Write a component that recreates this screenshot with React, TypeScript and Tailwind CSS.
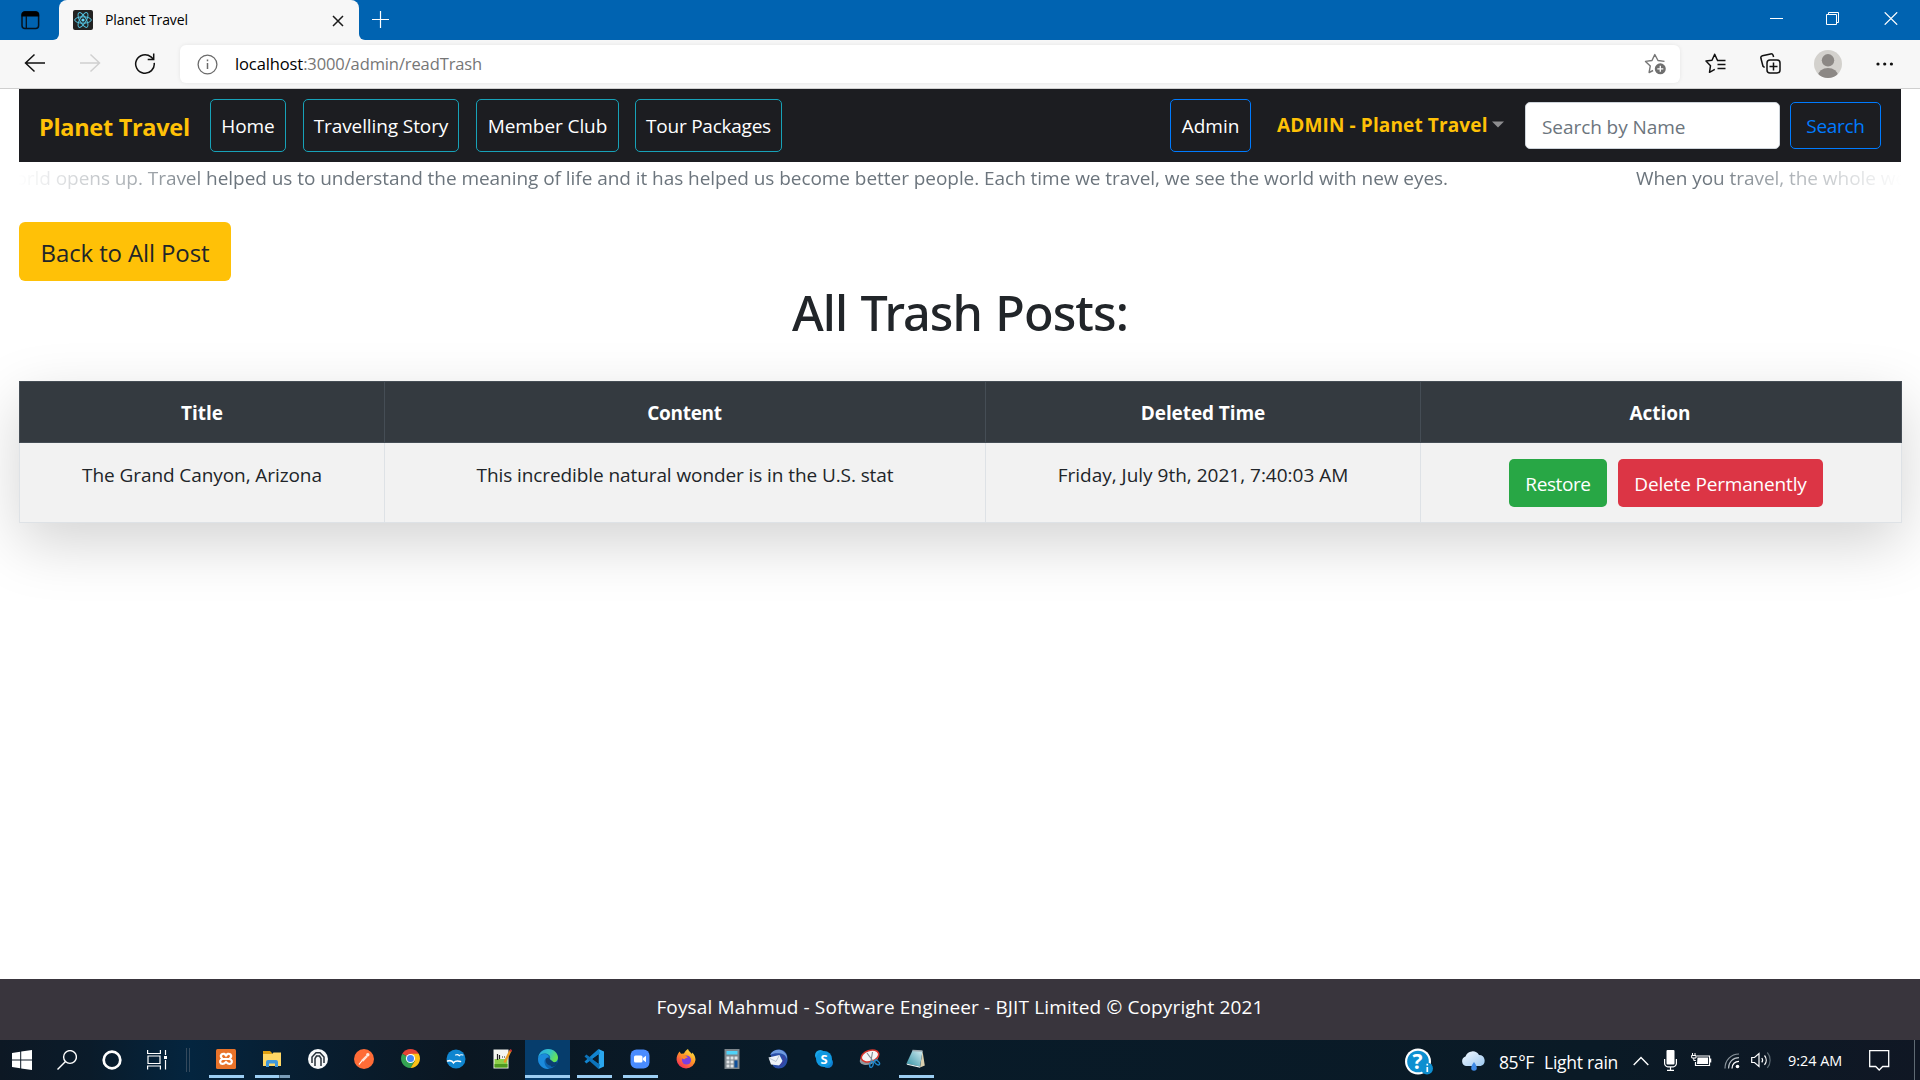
import type { ReactNode } from "react";

const STORY =
  "When you travel, the whole world opens up. Travel helped us to understand the meaning of life and it has helped us become better people. Each time we travel, we see the world with new eyes.";

/* ---------- Browser chrome ---------- */

function TabStrip() {
  return (
    <div className="flex h-10 w-full items-start bg-[linear-gradient(to_right,#0063b1_0px,#0063b1_50px,#f7f7f7_50px,#f7f7f7_370px,#0063b1_370px)]">
      <div className="flex h-10 w-[59px] items-start rounded-br-md bg-[#0063b1] pl-[21px] pt-[11px]">
        <svg width="19" height="19" viewBox="0 0 19 19" fill="none">
          <rect x="1" y="1" width="16.6" height="16.4" rx="3" stroke="#04131f" strokeWidth="1.5" />
          <path d="M.5 4a3.5 3.5 0 0 1 3.500-3.700h10.500a3.500 3.500 0 0 1 3.600 3.700v1.600H.5z" fill="#000" />
          <path d="M5.300 5v12" stroke="#04131f" strokeWidth="1.300" />
        </svg>
      </div>
      <div className="h-10 w-[300px] bg-[#0063b1]">
        <div className="flex h-10 w-[300px] items-start rounded-t-lg bg-[#f7f7f7]">
          <svg className="ml-[14px] mt-[10px]" width="20" height="20" viewBox="0 0 20 20" fill="none">
            <rect width="20" height="20" rx="2" fill="#222" />
            <g stroke="#53c1de" strokeWidth="1">
              <ellipse cx="10" cy="10" rx="8.300" ry="3.200" />
              <ellipse cx="10" cy="10" rx="8.300" ry="3.200" transform="rotate(60 10 10)" />
              <ellipse cx="10" cy="10" rx="8.300" ry="3.200" transform="rotate(120 10 10)" />
            </g>
            <circle cx="10" cy="10" r="1.600" fill="#61dafb" />
          </svg>
          <span className="ml-3 mt-[10px] text-[14px] leading-5 tracking-[-0.12px] text-black">Planet Travel</span>
          <svg className="ml-auto mr-[15px] mt-[15px]" width="12" height="12" viewBox="0 0 12 12">
            <path d="M1 1l10 10M11 1L1 11" stroke="#1b1b1b" strokeWidth="1.500" />
          </svg>
        </div>
      </div>
      <div className="flex h-10 flex-1 items-start rounded-bl-md bg-[#0063b1]">
        <svg className="ml-[13px] mt-[11px]" width="17" height="17" viewBox="0 0 17 17">
          <path d="M8.500 0v17M0 8.500h17" stroke="#fff" strokeWidth="1.200" />
        </svg>
      </div>
      <div className="flex h-10 items-start bg-[#0063b1]">
        <svg className="mr-[43px] mt-[12px]" width="13" height="13" viewBox="0 0 13 13">
          <path d="M0 6.500h13" stroke="#fff" strokeWidth="1" />
        </svg>
        <svg className="mr-[44px] mt-[12px]" width="14" height="13" viewBox="0 0 14 13" fill="none" stroke="#fff">
          <path d="M.5 2.500h10v10H.5zM2.500 2.500V.5h10v10h-2" />
        </svg>
        <svg className="mr-[22px] mt-[12px]" width="14" height="13" viewBox="0 0 14 13" fill="none" stroke="#fff" strokeWidth="1.200">
          <path d="M.7.3l12.500 12.400M13.200.3L.7 12.700" />
        </svg>
      </div>
    </div>
  );
}

function AddressBar() {
  return (
    <div className="flex h-[49px] w-full items-start border-b border-[#cfcfcf] bg-[#f7f7f7]">
      <div className="flex w-[180px] items-start pt-[13px]">
        <svg className="ml-[24px]" width="22" height="20" viewBox="0 0 22 20" fill="none" stroke="#111" strokeWidth="1.500">
          <path d="M10.500 1.500L1.500 10l9 8.500M1.500 10H21" />
        </svg>
        <svg className="ml-[33px]" width="22" height="20" viewBox="0 0 22 20" fill="none" stroke="#d0d0d0" strokeWidth="1.500">
          <path d="M11.500 1.500l9 8.500-9 8.500M20.500 10H1" />
        </svg>
        <svg className="ml-[33px]" width="22" height="22" viewBox="0 0 22 22" fill="none" stroke="#111" strokeWidth="1.500">
          <path d="M20.200 9.800A9.300 9.300 0 1 1 17 3.900l2.300 2.200" />
          <path d="M19.700.6v6h-6" />
        </svg>
      </div>
      <div className="mt-[5px] flex h-[38px] w-[1500px] items-center rounded-md bg-white shadow-[0_0_4px_rgba(0,0,0,0.08)]">
        <svg className="ml-[17px]" width="21" height="21" viewBox="0 0 21 21" fill="none" stroke="#6b6b6b" strokeWidth="1.300">
          <circle cx="10.500" cy="10.500" r="9.400" />
          <path d="M10.500 9v6M10.500 5.600v1.700" strokeWidth="1.500" />
        </svg>
        <span className="ml-[17px] text-[16.5px] leading-6 tracking-[-0.11px] text-[#767676]">
          <span className="text-black">localhost</span>:3000/admin/readTrash
        </span>
        <svg className="ml-auto mr-[14px]" width="22" height="22" viewBox="0 0 22 22" fill="none" stroke="#767676" strokeWidth="1.400" strokeLinejoin="round">
          <path d="M20.500 8.400l-6.500-.9L10.800 1.500 8 7.500l-6.500.9 4.800 4.500-1.200 6.600 4-2" />
          <circle cx="16.300" cy="15.800" r="5.500" fill="#6f6f6f" stroke="none" />
          <path d="M16.300 12.800v6M13.300 15.800h6" stroke="#fff" strokeWidth="1.300" />
        </svg>
      </div>
      <div className="flex h-12 items-start">
        <svg className="ml-[25px] mt-[13px]" width="21" height="21" viewBox="0 0 21 21" fill="none" stroke="#111" strokeWidth="1.500" strokeLinejoin="round">
          <path d="M13 7.300l-.6 0L9.700 1.300 7 7.300l-6 .8 4.500 4.600-1 6.600 5.300-3" />
          <path d="M12 7.500h8.500M12.500 11.500h8M12.500 15.500h8" />
        </svg>
        <svg className="ml-[34px] mt-[13px]" width="21" height="21" viewBox="0 0 21 21" fill="none" stroke="#111" strokeWidth="1.500">
          <path d="M4.600 14.500L3 13.200.9 5.300a2.200 2.200 0 0 1 1.500-2.600l8.200-1.800a2.200 2.200 0 0 1 2.500 1.400l.5 1.700" />
          <rect x="7" y="7" width="13" height="13" rx="3" fill="#f7f7f7" />
          <path d="M13.500 9.500v8M9.500 13.500h8" />
        </svg>
        <svg className="ml-[33px] mt-[10px]" width="28" height="28" viewBox="0 0 28 28">
          <clipPath id="avatar"><circle cx="14" cy="14" r="14" /></clipPath>
          <g clipPath="url(#avatar)">
            <rect width="28" height="28" fill="#d3d1cd" />
            <circle cx="14" cy="10.300" r="6.200" fill="#8c8885" />
            <ellipse cx="14" cy="26" rx="10" ry="8" fill="#8c8885" />
          </g>
        </svg>
        <svg className="ml-[34px] mt-[22px]" width="18" height="4" viewBox="0 0 18 4" fill="#111">
          <circle cx="2" cy="2" r="1.600" />
          <circle cx="8.700" cy="2" r="1.600" />
          <circle cx="15.400" cy="2" r="1.600" />
        </svg>
      </div>
    </div>
  );
}

/* ---------- Page ---------- */

function NavBar() {
  const link = "flex h-[53px] items-center justify-center rounded-[5px] border pt-[2px] text-[19px] text-white";
  return (
    <nav className="flex h-[73px] w-[1882px] items-center whitespace-nowrap bg-[#1c1d21] px-5">
      <span className="w-[171px] pt-[3px] text-[23.5px] font-bold leading-8 tracking-[-0.3px] text-[#ffc107]">Planet Travel</span>
      <a className={`${link} w-[76px] border-[#17a2b8] tracking-[-0.1px]`}>Home</a>
      <a className={`${link} ml-[17px] w-[156px] border-[#17a2b8] tracking-[-0.1px]`}>Travelling Story</a>
      <a className={`${link} ml-[17px] w-[143px] border-[#17a2b8] tracking-[-0.08px]`}>Member Club</a>
      <a className={`${link} ml-4 w-[147px] border-[#17a2b8] tracking-[-0.24px]`}>Tour Packages</a>
      <a className={`${link} ml-auto w-[81px] border-[#007bff]`}>Admin</a>
      <span className="ml-[26px] w-[215px] pb-[2px] text-[19px] font-bold leading-[30px] tracking-[0.13px] text-[#ffc107]">ADMIN - Planet Travel</span>
      <svg className="mb-[2px] mr-[21px]" width="12" height="7" viewBox="0 0 12 7">
        <path d="M0 .5h12L6 6.500z" fill="#8e8e90" />
      </svg>
      <input
        className="h-[47px] w-[255px] rounded-[5px] border border-[#ced4da] bg-white px-4 pt-[2px] text-[19px] tracking-[-0.07px] outline-none placeholder:text-[#6c757d]"
        placeholder="Search by Name"
      />
      <button className="ml-[10px] h-[47px] w-[91px] rounded-[5px] border border-[#007bff] pt-px text-[19px] tracking-[-0.3px] text-[#007bff]">Search</button>
    </nav>
  );
}

function Ticker() {
  return (
    <div className="flex h-[30px] w-[1882px] overflow-hidden whitespace-nowrap text-[19px] leading-[33px] tracking-[-0.05px] text-[#6c757d] [mask-image:linear-gradient(to_right,transparent,black_200px,black_calc(100%-200px),transparent)]">
      <div className="flex w-[1429px] shrink-0 justify-end">
        <span>{STORY}</span>
      </div>
      <span className="ml-[188px] shrink-0">{STORY}</span>
    </div>
  );
}

function TrashTable() {
  const th = "border border-[#454d55] p-0 pt-[2px] text-center font-bold";
  const td = "border border-[#dee2e6] p-0 pt-4 text-center align-top leading-[32px]";
  return (
    <table className="w-[1882px] table-fixed border-collapse bg-white text-[19px] text-[#212529] shadow-[0_20px_60px_rgba(0,0,0,0.175)]">
      <colgroup>
        <col className="w-[365px]" />
        <col className="w-[601px]" />
        <col className="w-[435px]" />
        <col className="w-[481px]" />
      </colgroup>
      <thead>
        <tr className="h-[61px] bg-[#343a40] text-white">
          <th className={th}>Title</th>
          <th className={`${th} pr-px tracking-[-0.3px]`}>Content</th>
          <th className={`${th} tracking-[-0.08px]`}>Deleted Time</th>
          <th className={`${th} pr-[2px]`}>Action</th>
        </tr>
      </thead>
      <tbody>
        <tr className="h-[80px] bg-[#f2f2f2]">
          <td className={`${td} tracking-[-0.08px]`}>The Grand Canyon, Arizona</td>
          <td className={`${td} tracking-[-0.09px]`}>This incredible natural wonder is in the U.S. stat</td>
          <td className={td}>Friday, July 9th, 2021, 7:40:03 AM</td>
          <td className="border border-[#dee2e6] p-0 align-top">
            <div className="flex gap-[11px] pl-[88px] pt-4 text-white">
              <button className="h-12 w-[98px] rounded-[5px] bg-[#28a745] pt-[2px] tracking-[-0.4px]">Restore</button>
              <button className="h-12 w-[205px] rounded-[5px] bg-[#dc3545] pt-[2px] tracking-[-0.17px]">Delete Permanently</button>
            </div>
          </td>
        </tr>
      </tbody>
    </table>
  );
}

/* ---------- Taskbar ---------- */

const apps: { name: string; state?: "open" | "multi" | "active"; icon: ReactNode }[] = [
  {
    name: "XAMPP",
    state: "open",
    icon: (
      <svg width="20" height="20" viewBox="0 0 20 20" fill="none">
        <rect width="20" height="20" rx="1.500" fill="#e8732a" />
        <path d="M5.500 5.500c2-1.500 3.500-.5 4.500 1 1-1.500 2.500-2.500 4.500-1 1.500 1.500.5 3-1 4.500 2.500.5 3 3 1.500 4.500-2 1-3.500 0-5-1.500-1.500 1.500-3 2.500-5 1.500-1.500-1.500-1-4 1.500-4.500-1.500-1.500-2.500-3-1-4.500zM7 10h6" stroke="#fff" strokeWidth="2.200" />
      </svg>
    ),
  },
  {
    name: "Explorer",
    state: "multi",
    icon: (
      <svg width="20" height="20" viewBox="0 0 20 20">
        <path d="M1 2h7l2 2v3H1z" fill="#e0a010" />
        <path d="M1 5h9l1.500-1.500H19V17H1z" fill="#ffd765" />
        <path d="M4 18v-5a2 2 0 0 1 2-2h8a2 2 0 0 1 2 2v5h-3v-3.500H7V18z" fill="#3f97dc" />
      </svg>
    ),
  },
  {
    name: "OpenVPN",
    icon: (
      <svg width="20" height="20" viewBox="0 0 20 20" fill="none">
        <circle cx="10" cy="10" r="10" fill="#f7f9fa" />
        <path d="M4 14V8l4-4.300h4L16 8v6" stroke="#27313a" strokeWidth="1.500" />
        <path d="M7 17V9.500L8.500 7h3L13 9.500V17" stroke="#27313a" strokeWidth="1.500" />
      </svg>
    ),
  },
  {
    name: "Postman",
    icon: (
      <svg width="20" height="20" viewBox="0 0 20 20" fill="none">
        <circle cx="10" cy="10" r="10" fill="#ff6c37" />
        <path d="M5 15.500l3.500-4.500" stroke="#fff" strokeWidth="1.200" />
        <path d="M8.200 11.800l4.800-4.800" stroke="#ffe2d6" strokeWidth="2.400" />
        <circle cx="13.800" cy="5.800" r="1.700" fill="#ffe9df" />
      </svg>
    ),
  },
  {
    name: "Chrome",
    icon: (
      <svg width="19" height="19" viewBox="0 0 20 20">
        <path d="M10 10L1.340 5A10 10 0 0 1 18.660 5z" fill="#e54335" />
        <path d="M10 10L1.340 5A10 10 0 0 0 10 20l4.500-7.500z" fill="#34a353" />
        <path d="M10 10l4.500 2.500L10 20A10 10 0 0 0 18.660 5H10z" fill="#fbc116" />
        <circle cx="10" cy="10" r="4.800" fill="#fff" />
        <circle cx="10" cy="10" r="3.700" fill="#4285f4" />
      </svg>
    ),
  },
  {
    name: "OpenOffice",
    icon: (
      <svg width="20" height="20" viewBox="0 0 20 20" fill="none" stroke="#fff" strokeLinecap="round">
        <circle cx="10" cy="10" r="9.500" fill="#0f85cf" stroke="none" />
        <path d="M9.500 6c1.700-.8 2.900-.4 3.700.8.800-1.200 2.200-1.200 3.700-.8" strokeWidth="1.100" />
        <path d="M1.500 12c3-1 5 0 6 1.800 1.500-1.800 4-2.200 7-1.300" strokeWidth="1.600" />
      </svg>
    ),
  },
  {
    name: "Notepad++",
    icon: (
      <svg width="20" height="20" viewBox="0 0 20 20" fill="none">
        <rect x="1.500" y=".5" width="15" height="19" fill="#f4f6f0" />
        <rect x="2.500" y="10" width="13" height="8.500" fill="#8fd04a" />
        <rect x="2.500" y="15" width="13" height="3.500" fill="#4f9a20" />
        <path d="M5.500 5v6M7.500 6v4M10 8h1M12 8h1" stroke="#222" strokeWidth="1.200" />
        <path d="M18.500 1.500l-6 12" stroke="#e89a20" strokeWidth="2.400" />
        <path d="M19.200.5l-1 2" stroke="#c03030" strokeWidth="2.400" />
      </svg>
    ),
  },
  {
    name: "Edge",
    state: "active",
    icon: (
      <svg width="20" height="20" viewBox="0 0 20 20">
        <defs>
          <linearGradient id="edgeTop" x1="0" y1="0" x2="1" y2=".4">
            <stop offset="0" stopColor="#2aa6e6" />
            <stop offset=".6" stopColor="#35c6c5" />
            <stop offset="1" stopColor="#66e357" />
          </linearGradient>
        </defs>
        <circle cx="10" cy="10" r="10" fill="#0d64b0" />
        <path d="M.1 9C.8 3.500 5 0 10 0c6 0 10 4.300 10 8.500 0 3-2.300 5-5 5-2.500 0-3.800-1-3.800-1.800s1-1.200 1-3c0-2.500-2.400-4.200-5.400-4.200C3.500 4.500.8 6.500.1 9z" fill="url(#edgeTop)" />
        <path d="M12 13c1 .8 3.500 1 6 0 1.500 0 1 1.500 0 3-1.500 1.500-3 2-5 1.500z" fill="#063d6c" />
        <path d="M9.500 8.200c-2.700 1.200-3 7.500 3.700 8.600 2.500.3 4.500-.6 5.400-1.300" fill="#0c3f74" />
        <path d="M.1 9C1 6 4 4.800 7 5c3 .2 4 2 3.500 3.200C7 8.500 5.500 12 7 15.500c.8 2 2.200 3.500 4 4.400C4.500 20.500-.5 15.500.1 9z" fill="#1b8bdc" />
      </svg>
    ),
  },
  {
    name: "VS Code",
    state: "open",
    icon: (
      <svg width="20" height="20" viewBox="0 0 20 20">
        <path d="M14.500 0L20 2.500v15L14.500 20z" fill="#2aa7ee" />
        <path d="M14.500 0L.5 12.500l1.800 2L16 4.500z" fill="#1184cf" />
        <path d="M14.500 20L.5 7.500l1.800-2L16 15.500z" fill="#0d73b9" />
        <path d="M14.500 5.500v9L8.500 10z" fill="#0a1b29" />
      </svg>
    ),
  },
  {
    name: "Zoom",
    state: "open",
    icon: (
      <svg width="20" height="20" viewBox="0 0 20 20">
        <rect x=".5" y=".5" width="19" height="19" rx="6" fill="#4a8cff" />
        <rect x="4" y="6.500" width="8.500" height="7" rx="1.500" fill="#fff" />
        <path d="M13 9l3-2.200v6.400L13 11z" fill="#fff" />
      </svg>
    ),
  },
  {
    name: "Firefox",
    icon: (
      <svg width="20" height="20" viewBox="0 0 20 20">
        <defs>
          <linearGradient id="fox" x1=".9" y1="0" x2=".2" y2="1">
            <stop offset="0" stopColor="#fff04a" />
            <stop offset=".45" stopColor="#ff9a26" />
            <stop offset="1" stopColor="#f5245c" />
          </linearGradient>
        </defs>
        <path d="M3.500 2.500L5 4.800l3-.3c1-2.500 2.500-3.500 4-4.500.3 2 2.500 3 4 5l.3-1.500C18.500 6 19.500 8 19.500 11A9.500 9.500 0 0 1 .6 11C.4 7.500 1.500 5 3.500 2.500z" fill="url(#fox)" />
        <circle cx="10.500" cy="11" r="4.600" fill="#7a3fe0" />
        <path d="M4.500 6.500c2-.8 4-.5 5.500.5l2 1.200c-1.500 1-3 .8-3.500 2-1.500 0-3.500-1.500-4-3.700z" fill="#ff8a2a" />
      </svg>
    ),
  },
  {
    name: "Calculator",
    icon: (
      <svg width="20" height="20" viewBox="0 0 20 20">
        <rect x="2.500" width="15" height="20" fill="#7d868c" />
        <rect x="4.500" y="2" width="11" height="3.500" fill="#4fd2f7" />
        <path d="M4.500 7.500h3v3h-3zM8.500 7.500h3v3h-3zM12.500 7.500h3v3h-3zM4.500 11.500h3v3h-3zM8.500 11.500h3v3h-3zM4.500 15.500h3v3h-3zM8.500 15.500h3v3h-3z" fill="#dfe4e7" />
        <rect x="12.500" y="11.500" width="3" height="7" fill="#0d4f9c" />
      </svg>
    ),
  },
  {
    name: "Thunderbird",
    icon: (
      <svg width="20" height="20" viewBox="0 0 20 20">
        <path d="M2.500 5C5 1 10-.5 14 1c4 1.500 6 5.500 5.500 10-.5 5-4 8.500-9 8.500-2 0-4-.8-5.500-2.500z" fill="#2a4fa8" />
        <path d="M2 6C4 1.500 9 0 13 1c4 1.500 6.500 5 6 9-1-3-3-5-6-5.500C9 4 5 4 2 6z" fill="#6f9be0" />
        <path d="M.5 8.500L11.500 6l3 6-3 4.500-8.500-1z" fill="#eef3f8" />
        <path d="M1 9l7 3.500L11.500 6" fill="none" stroke="#a9b8c8" strokeWidth=".8" />
        <path d="M15 7c2 3 1 7.500-3.500 10" stroke="#3f3fa0" strokeWidth="1.500" fill="none" />
      </svg>
    ),
  },
  {
    name: "Skype",
    icon: (
      <svg width="20" height="20" viewBox="0 0 20 20">
        <circle cx="6.300" cy="6.300" r="5.300" fill="#1aa6e8" />
        <circle cx="13.700" cy="13.700" r="5.300" fill="#0f7fd0" />
        <circle cx="10" cy="10" r="8" fill="#0f98e0" />
        <text x="10" y="14.600" textAnchor="middle" fontSize="13" fontWeight="700" fill="#fff">S</text>
      </svg>
    ),
  },
  {
    name: "Snipping Tool",
    icon: (
      <svg width="22" height="20" viewBox="0 0 22 20" fill="none">
        <ellipse cx="10" cy="10" rx="9.500" ry="5.500" fill="#8f989e" transform="rotate(-18 10 10)" />
        <ellipse cx="11" cy="7" rx="9" ry="5.500" fill="#f5f5f5" stroke="#d8352c" strokeWidth="1.600" transform="rotate(-18 11 7)" />
        <path d="M8 4l6 8M13.500 3L12 12" stroke="#7d8790" strokeWidth="1.100" />
        <ellipse cx="12.500" cy="15.500" rx="1.700" ry="3" stroke="#1f86c9" strokeWidth="1.400" transform="rotate(15 12.500 15.500)" />
        <ellipse cx="18" cy="13.500" rx="1.700" ry="3" stroke="#1f86c9" strokeWidth="1.400" transform="rotate(-50 18 13.500)" />
      </svg>
    ),
  },
  {
    name: "Notepad",
    state: "open",
    icon: (
      <svg width="20" height="20" viewBox="0 0 20 20">
        <defs>
          <linearGradient id="pad" x1="1" y1="0" x2="0" y2="1">
            <stop offset="0" stopColor="#d5eef3" />
            <stop offset="1" stopColor="#2f8fa3" />
          </linearGradient>
        </defs>
        <path d="M16.500 2l2.300 14.500L14 18.500z" fill="#d9cfae" />
        <path d="M6.500 1.500L16.500 2 14 17.500.5 14.500z" fill="url(#pad)" />
        <path d="M.5 14.500L14 17.500v1.300L1 15.800z" fill="#e9f3f5" />
        <path d="M6.500.8L16.500 1.300v1.500L6.500 2.300z" fill="#9aa7ad" />
      </svg>
    ),
  },
];

function TaskbarApp({ name, state, icon }: (typeof apps)[number]) {
  return (
    <div
      aria-label={name}
      className={`flex h-10 flex-col items-center ${state === "active" ? "mr-px w-[45px] bg-[#063d6c]" : "w-[46px]"}`}
    >
      <div className="flex h-[35px] items-start justify-center pt-[9px]">{icon}</div>
      {state === "open" && <div className="h-[3px] w-[35px] bg-[#9ccef3]" />}
      {state === "active" && <div className="h-[3px] w-full bg-[#9ccef3]" />}
      {state === "multi" && (
        <div className="flex h-[3px] w-[35px]">
          <div className="w-6 bg-[#9ccef3]" />
          <div className="flex-1 border-l border-[#4b6a82] bg-[#7a9cb8]" />
        </div>
      )}
    </div>
  );
}

function Taskbar() {
  return (
    <div className="flex h-10 w-full items-start bg-[linear-gradient(to_right,#0d1824_0px,#0a1b2a_90px,#04253f_190px,#071f33_280px,#0b1722_460px,#081b29_800px,#0a1a26_1600px,#101724_1920px)]">
      <div className="flex w-[44px] justify-center pt-[10px]">
        <svg width="20" height="20" viewBox="0 0 20 20" fill="#fff">
          <path d="M0 2.900l8.200-1.200v7.800H0zM9.200 1.500L20 0v9.500H9.200zM0 10.500h8.200v7.800L0 17.100zM9.200 10.500H20V20L9.200 18.500z" />
        </svg>
      </div>
      <div className="flex w-[45px] justify-center pt-[10px]">
        <svg width="20" height="20" viewBox="0 0 20 20" fill="none" stroke="#fff" strokeWidth="1.400">
          <circle cx="13" cy="7" r="6.400" />
          <path d="M8.500 11.500L.5 19.500" />
        </svg>
      </div>
      <div className="flex w-[45px] justify-center pt-[10px]">
        <svg width="20" height="20" viewBox="0 0 20 20" fill="none">
          <circle cx="10" cy="10" r="8.300" stroke="#fff" strokeWidth="2.700" />
        </svg>
      </div>
      <div className="flex w-[46px] justify-center pt-[10px]">
        <svg width="21" height="20" viewBox="0 0 21 20" fill="none" stroke="#fff" strokeWidth="1.200">
          <path d="M.6 0v3.500h12.800V0M.6 19.500V16h12.800v3.500M1 6h12v7.500H1zM18.500 0v5M18.500 10v9.500" />
          <rect x="17" y="6" width="3" height="3" fill="#fff" stroke="none" />
        </svg>
      </div>
      <div className="flex w-[23px] gap-[2px] pl-[6px] pt-2">
        <div className="h-6 w-px bg-[#34495c]" />
        <div className="h-6 w-px bg-[#34495c]" />
      </div>
      {apps.map((app) => (
        <TaskbarApp key={app.name} {...app} />
      ))}
      <div className="ml-auto flex h-10 items-start whitespace-nowrap text-white">
        <svg className="mt-2" width="30" height="28" viewBox="0 0 30 28">
          <circle cx="14" cy="13.500" r="13" fill="#fff" />
          <circle cx="14" cy="13.500" r="10.800" fill="#0e8fd0" />
          <text x="13.500" y="20.500" textAnchor="middle" fontSize="21" fontWeight="700" fill="#fff">?</text>
          <circle cx="23" cy="20.500" r="6" fill="#0e8fd0" />
          <path d="M23.300 19v5M23.300 15.800v1.800" stroke="#fff" strokeWidth="1.700" />
        </svg>
        <svg className="ml-[26px] mt-[11px]" width="27" height="21" viewBox="0 0 27 21">
          <defs>
            <linearGradient id="cloud" x1="0" y1="0" x2="1" y2="1">
              <stop offset="0" stopColor="#f4f9ff" />
              <stop offset="1" stopColor="#9cc8f0" />
            </linearGradient>
          </defs>
          <path d="M6 15a5 5 0 0 1-.5-9.600A7.500 7.500 0 0 1 19 4a5.600 5.600 0 0 1 1.500 11z" fill="url(#cloud)" />
          <path d="M14 11c1.800 2.700 2.800 4.200 2.800 6a2.800 2.800 0 0 1-5.600 0c0-1.800 1-3.300 2.800-6z" fill="#3f8ae6" />
        </svg>
        <span className="ml-[12px] w-[45px] pt-[9px] text-[17.5px] leading-[26px] tracking-[-0.4px]">85°F</span>
        <span className="w-[89px] pt-[9px] text-[17.5px] leading-[26px] tracking-[-0.25px]">Light rain</span>
        <svg className="mt-4" width="16" height="10" viewBox="0 0 16 10" fill="none" stroke="#fff" strokeWidth="1.400">
          <path d="M.7 9L8 1.500 15.300 9" />
        </svg>
        <svg className="ml-[15px] mt-[10px]" width="13" height="21" viewBox="0 0 13 21" fill="none" stroke="#fff">
          <rect x="2.500" y="0" width="8" height="14.500" rx="1" fill="#fff" stroke="none" />
          <path d="M.6 9v4.500c0 2 2 3.300 3 3.300h5.800c1 0 3-1.300 3-3.300V9M6.500 17v3M3 20.300h7" strokeWidth="1.200" />
        </svg>
        <svg className="ml-[14px] mt-[13px]" width="21" height="15" viewBox="0 0 21 15" fill="none" stroke="#fff">
          <path d="M5.500 3h13v9.500H4.500V9" strokeWidth="1.200" />
          <path d="M6.500 4.500h10.500v6.500H6z" fill="#fff" stroke="none" />
          <path d="M19.500 5.500v4" strokeWidth="1.500" />
          <path d="M1.500 0v2M4 0v2M.5 2.500h4.500v2.500H.8zM2.800 5v2.500h2" strokeWidth="1" />
        </svg>
        <svg className="ml-[12px] mt-[13px]" width="16" height="16" viewBox="0 0 16 16" fill="none" stroke="#fff" strokeWidth="1.200">
          <path d="M1 15.500C1 7 7 1 15 1" stroke="#8b959d" />
          <path d="M4.500 15.500C4.500 9 9 4.700 15 4.700" stroke="#b6bdc3" />
          <path d="M8 15.500C8 11 11 8.300 15 8.300" />
          <circle cx="13.500" cy="13.500" r="1.800" fill="#fff" stroke="none" />
        </svg>
        <svg className="ml-[11px] mt-[11px]" width="21" height="19" viewBox="0 0 21 19" fill="none" stroke="#fff" strokeWidth="1.200">
          <path d="M.7 6.500h2.800L8 2.500v13L3.500 11.500H.7z" />
          <path d="M10.800 7c1 1.300 1 3 0 4.300" />
          <path d="M13.500 4.500c2.300 2.700 2.300 6.600 0 9.300" />
          <path d="M16.300 1.500c3.800 4.300 3.800 11 0 15.300" stroke="#5b6871" />
        </svg>
        <span className="ml-[16px] w-[81px] pt-[9px] text-[14.4px] leading-6">9:24 AM</span>
        <svg className="mt-[10px]" width="21" height="21" viewBox="0 0 21 21" fill="none" stroke="#fff" strokeWidth="1.300">
          <path d="M.7.7h19v15.800h-6L10.200 20l-3.500-3.500h-6z" />
        </svg>
        <div className="ml-[24px] mr-[5px] h-10 w-px bg-[#5f6a73]" />
      </div>
    </div>
  );
}

export default function App() {
  return (
    <div className="flex h-[1080px] w-[1920px] flex-col overflow-hidden bg-white font-['Open_Sans','Noto_Sans',sans-serif]">
      <header className="shrink-0 bg-[#f7f7f7]">
        <TabStrip />
        <AddressBar />
      </header>
      <main className="flex flex-1 flex-col px-[19px]">
        <NavBar />
        <Ticker />
        <button className="mt-[30px] h-[59px] w-[212px] rounded-md bg-[#ffc107] pt-[2px] text-[24px] tracking-[-0.12px] text-[#212529]">
          Back to All Post
        </button>
        <h1 className="mb-[38px] text-center font-['Noto_Sans',sans-serif] text-[48.5px] font-medium leading-[62px] tracking-[-0.9px] text-[#212529] [word-spacing:1.5px]">
          All Trash Posts:
        </h1>
        <TrashTable />
      </main>
      <footer className="h-[61px] shrink-0 bg-[#39353d] pt-[13px] text-center text-[19px] leading-[30px] tracking-[0.14px] text-white">
        Foysal Mahmud - Software Engineer - BJIT Limited © Copyright 2021
      </footer>
      <Taskbar />
    </div>
  );
}
